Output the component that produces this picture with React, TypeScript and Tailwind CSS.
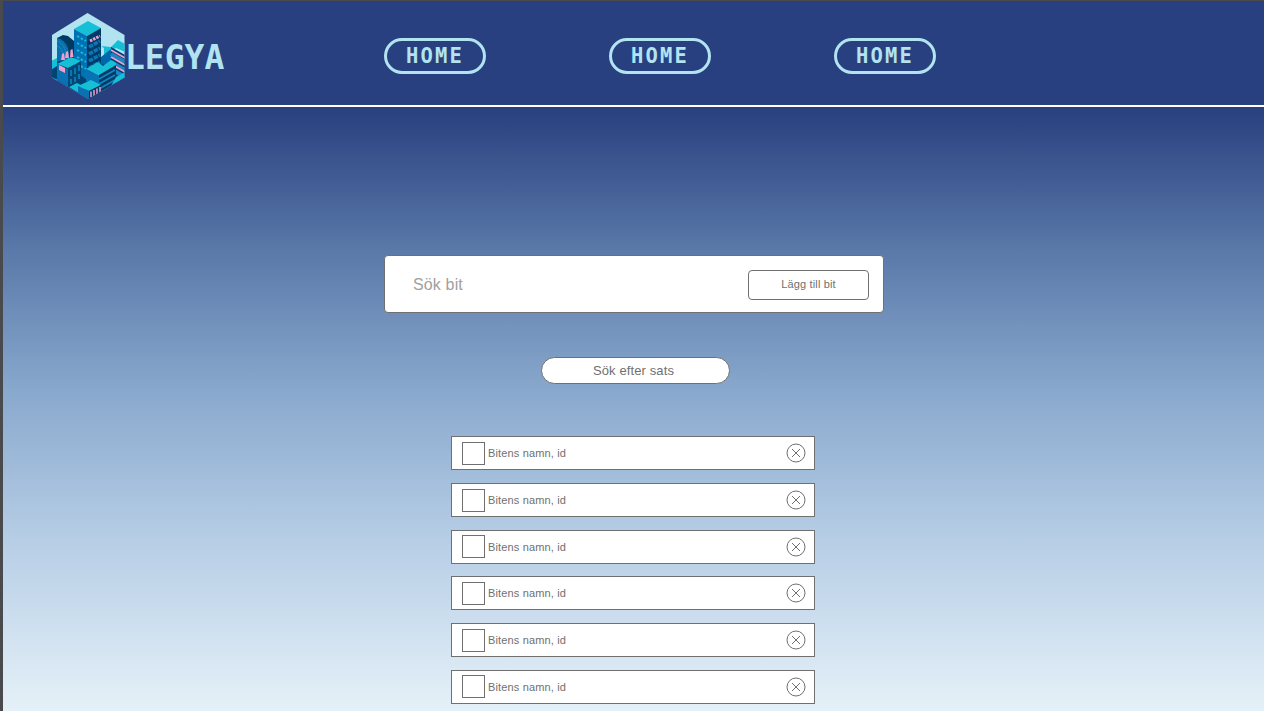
import React from "react";

const navItems = ["HOME", "HOME", "HOME"];
const bits = Array.from({ length: 6 }, () => "Bitens namn, id");

function CityLogo() {
  return (
    <svg className="h-[86px] w-[74px] shrink-0" viewBox="51 13 74 86">
      <defs>
        <clipPath id="hex">
          <path d="M87.500 13L124.500 35V77.500L88 99L52 77.500V35Z" />
        </clipPath>
      </defs>
      <g clipPath="url(#hex)">
        <path fill="#b2e3f0" d="M51 13H125V99H51Z" />
        {/* curved tower */}
        <path fill="#003a63" d="M57 38L63 35L68 36L74 41V66H57Z" />
        <path fill="#0a6fae" d="M57 38C63 39 69 45 69 55V64H57Z" />
        <path stroke="#15a5ca" strokeWidth="1" strokeDasharray="1 1" fill="none" d="M57 41C62 42 66 48 66 57M57 46C61 47 63 51 63 59" />
        {/* base */}
        <path fill="#004474" d="M51 63L74 58L100 62L125 60V99H51Z" />
        <path fill="#15bfd6" d="M51 61L57 58V66L51 70ZM51 77L58 80L52 84Z" />
        {/* right tower */}
        <path fill="#15bfd6" d="M101 46L104 48V55L116 48L125 52V44L118 40L111 47Z" />
        <path fill="#0067ab" d="M101 57L111 49V66L101 64Z" />
        <path fill="#003f70" d="M111 47L125 55V76L111 68Z" />
        <path stroke="#2184c5" strokeWidth="4" d="M111 54L125 62M111 62L125 70M111 69L125 77" />
        <path stroke="#ef9fca" strokeWidth="1.700" d="M111 50L125 58M111 57L125 65M111 64L125 72" />
        {/* main tower */}
        <path fill="#15bfd6" d="M74 29L88 21L101 28L87 36Z" />
        <path fill="#0072b4" d="M74 29L87 36V80L74 70Z" />
        <path fill="#003a67" d="M87 36L101 28V66L87 74Z" />
        <path stroke="#21b5d1" strokeWidth="2" strokeDasharray="2.500 1.800" d="M77 36L86 41M77 43L86 48M77 50L86 55M77 57L86 62M77 64L86 69" />
        <path stroke="#0b76b5" strokeWidth="3.500" strokeDasharray="4.500 1" d="M89 47L100 41M89 54L100 48M89 61L100 55M89 68L100 62" />
        <path stroke="#ef9fca" strokeWidth="3" strokeDasharray="2.500 1" d="M90 41L100 36" />
        {/* factory */}
        <path fill="#15bfd6" d="M57 64L71 57L81 61L68 68Z" />
        <path fill="#0872b5" d="M57 64L68 69V87L57 80Z" />
        <path fill="#004676" d="M68 69L81 61V80L68 89Z" />
        <path stroke="#0b86bd" strokeWidth="1.600" d="M71 70V76M75 68V74M79 65V71M71 79V84M75 77V82M79 74V79" />
        <path fill="#ef9fca" d="M59 65L65 68V73L59 70ZM62 54L64 53L65 60H61ZM66 52L68 51L69 58H65ZM70.500 50L72.500 49L73.500 57H70Z" />
        {/* right block */}
        <path fill="#15bfd6" d="M86 69L98 62L103 66L111 60L116 63V66L99 76Z" />
        <path fill="#0772b4" d="M86 69L99 76V87L86 81Z" />
        <path fill="#003a67" d="M99 75L116 65V83L99 92Z" />
        <path stroke="#1285be" strokeWidth="2" d="M99 79L115 70M99 84L115 75M99 89L115 80" />
        <path fill="#15bfd6" d="M116 77L125 72V78L111 86ZM69 87L77 83L86 88L79 93Z" />
        {/* front block */}
        <path fill="#15bfd6" d="M78 86L91 80L101 85L89 91Z" />
        <path fill="#0872b5" d="M78 86L89 91V99L78 94Z" />
        <path fill="#003a67" d="M89 91L101 85V94L89 100Z" />
        <path stroke="#ef9fca" strokeWidth="1.500" d="M91 91.500V97M94 90V96M97 88.500V94.500M100 87V92" />
      </g>
    </svg>
  );
}

function RemoveIcon() {
  return (
    <svg className="size-5" viewBox="0 0 20 20" fill="none" stroke="#707070" strokeWidth="1">
      <circle cx="10" cy="10" r="9" />
      <path d="M6 6L14 14M14 6L6 14" />
    </svg>
  );
}

export default function App() {
  return (
    <div className="h-[720px] overflow-hidden bg-white font-['Liberation_Sans',sans-serif] text-[#707070]">
      <div className="flex h-[711px] flex-col overflow-hidden border-l-[3px] border-t border-[#484a4d]">
        <header className="flex h-[106px] shrink-0 items-start border-b-2 border-white bg-[#28407f] pl-12 font-['DejaVu_Sans_Mono',monospace] font-bold text-[#b2e3f0]">
          <div className="flex w-[333px] pt-3">
            <CityLogo />
            <span className="pt-[25px] text-[33px] leading-[40px]">LEGYA</span>
          </div>
          <nav className="flex gap-[123px] pt-[36.500px]">
            {navItems.map((label, i) => (
              <a key={i} className="flex h-[36px] w-[102px] items-center justify-center rounded-full border-[3px] border-[#b2e3f0] pt-[2px] text-[20.5px] leading-none tracking-[2.2px]">
                <span>{label}</span>
              </a>
            ))}
          </nav>
        </header>
        <main className="flex grow flex-col bg-[linear-gradient(180deg,#28407f_0%,#5b79a9_24%,#89a8cd_47%,#b7cee6_72%,#e5f1f8_100%)] pt-[148px]">
          <div className="ml-[381px] flex h-[58px] w-[500px] shrink-0 items-center justify-between rounded-[4px] border border-[#707070] bg-white pl-7 pr-[14px] pt-px">
            <span className="text-[16px] tracking-[0.15px] text-[#a0a0a0]">Sök bit</span>
            <button className="h-[30px] w-[121px] rounded-[4px] border border-[#707070] pb-px text-[11px] tracking-[0.15px]">Lägg till bit</button>
          </div>
          <button className="ml-[538px] mt-11 h-[27px] w-[189px] shrink-0 rounded-full border border-[#707070] bg-white pr-1 text-[13px] tracking-[0.12px]">
            Sök efter sats
          </button>
          <ul className="ml-[448px] mt-[52.400px] flex w-[364px] flex-col gap-[12.700px]">
            {bits.map((name, i) => (
              <li key={i} className="flex h-[34px] items-center border border-[#707070] bg-white pl-[10px] pr-[8.500px]">
                <span className="size-[23px] shrink-0 border border-[#707070]" />
                <span className="grow pl-[3px] text-[11px] tracking-[0.15px]">{name}</span>
                <RemoveIcon />
              </li>
            ))}
          </ul>
        </main>
      </div>
    </div>
  );
}
